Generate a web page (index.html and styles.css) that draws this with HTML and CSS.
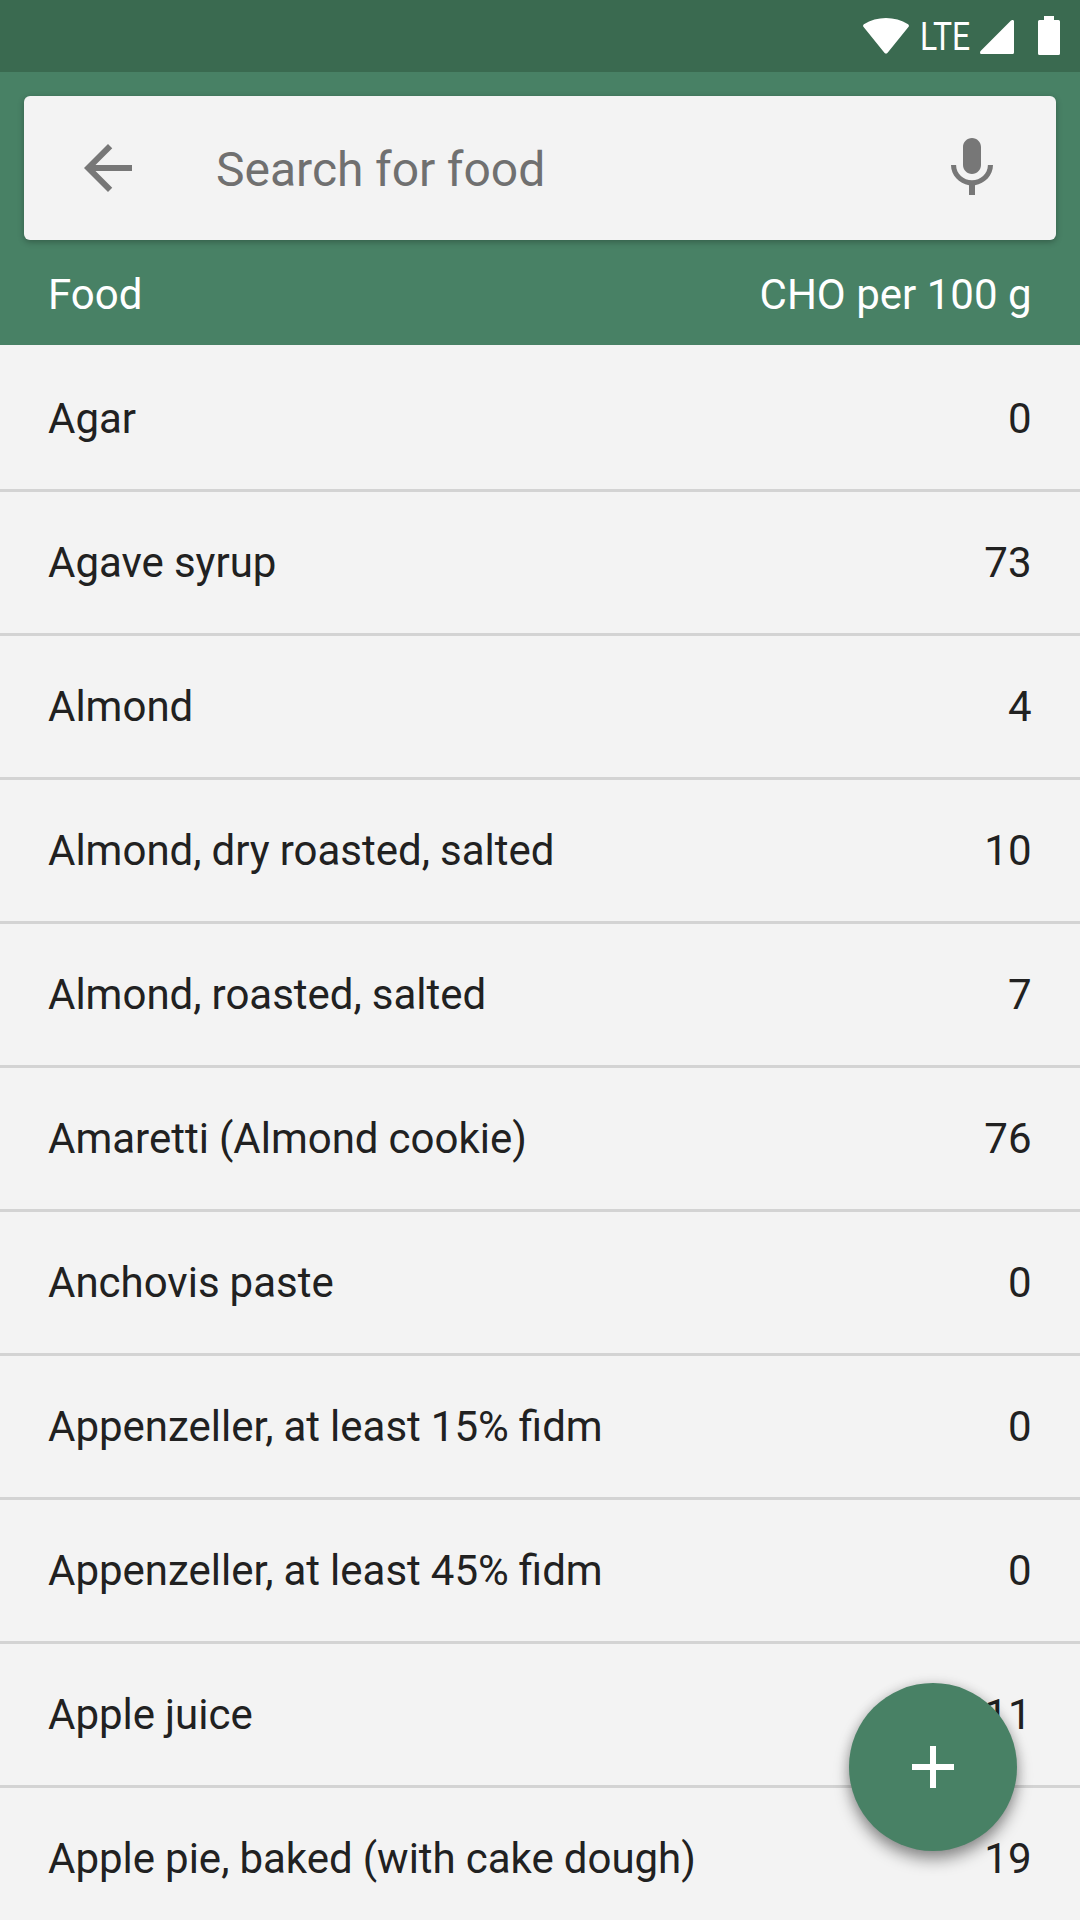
FILE: index.html
```html
<!DOCTYPE html>
<html lang="en">
<head>
<meta charset="utf-8">
<title>Food list</title>
<link rel="stylesheet" href="styles.css">
</head>
<body>
<div class="screen">
  <div class="status-bar">
    <svg class="wifi" viewBox="0 0 48 38" width="48" height="38"><path d="M1.6 9.9C.8 9 .9 7.9 1.9 7.2C15-1.2 33-1.2 46.100 7.200C47.100 7.900 47.200 9 46.400 9.900L25.600 35.700C24.600 36.900 23.400 36.900 22.400 35.700Z"/></svg>
    <span class="network">LTE</span>
    <svg class="signal" viewBox="0 0 34 34" width="34" height="34"><path d="M31 .6C32 -.4 34 0 34 1.500V32.500Q34 34 32.500 34H1.500C0 34-.4 32 .6 31Z"/></svg>
    <svg class="battery" viewBox="0 0 22 39" width="22" height="39"><path d="M6 0H16V4H20.500Q22 4 22 5.500V37.500Q22 39 20.500 39H1.500Q0 39 0 37.500V5.500Q0 4 1.500 4H6Z"/></svg>
  </div>
  <header class="header">
    <div class="search">
      <svg class="icon" viewBox="0 0 24 24"><path d="M20 11H7.830l5.590-5.590L12 4l-8 8 8 8 1.410-1.410L7.830 13H20v-2z"/></svg>
      <span class="placeholder">Search for food</span>
      <svg class="icon" viewBox="0 0 24 24"><path d="M12 14c1.660 0 3-1.340 3-3V5c0-1.660-1.340-3-3-3S9 3.340 9 5v6c0 1.660 1.340 3 3 3zm5.300-3c0 3-2.540 5.100-5.300 5.100S6.700 14 6.700 11H5c0 3.410 2.720 6.230 6 6.720V21h2v-3.280c3.280-.480 6-3.300 6-6.720h-1.700z"/></svg>
    </div>
    <div class="columns"><span>Food</span><span>CHO per 100 g</span></div>
  </header>
  <main class="list">
    <div class="row"><span>Agar</span><span>0</span></div>
    <div class="row"><span>Agave syrup</span><span>73</span></div>
    <div class="row"><span>Almond</span><span>4</span></div>
    <div class="row"><span>Almond, dry roasted, salted</span><span>10</span></div>
    <div class="row"><span>Almond, roasted, salted</span><span>7</span></div>
    <div class="row"><span>Amaretti (Almond cookie)</span><span>76</span></div>
    <div class="row"><span>Anchovis paste</span><span>0</span></div>
    <div class="row"><span>Appenzeller, at least 15% fidm</span><span>0</span></div>
    <div class="row"><span>Appenzeller, at least 45% fidm</span><span>0</span></div>
    <div class="row"><span>Apple juice</span><span>11</span></div>
    <div class="row"><span>Apple pie, baked (with cake dough)</span><span>19</span></div>
  </main>
  <div class="fab"><svg viewBox="0 0 24 24" width="72" height="72"><path d="M19 13h-6v6h-2v-6H5v-2h6V5h2v6h6v2z"/></svg></div>
</div>
</body>
</html>
```
FILE: styles.css
```css
* { box-sizing: border-box; }

body {
  margin: 0;
  font-family: Roboto, "Liberation Sans", sans-serif;
  font-size: 42px;
  word-spacing: -.4px;
  color: #212121;
  background: #f3f3f3;
}

.screen {
  position: relative;
  width: 1080px;
  height: 1920px;
  overflow: hidden;
}

.status-bar {
  display: flex;
  justify-content: flex-end;
  height: 72px;
  padding-right: 20px;
  background: #3a6a50;
  fill: #fff;
}

.wifi { margin-top: 17px; }

.network {
  width: 50px;
  margin: 0 10px;
  color: #fff;
  font-size: 38px;
  line-height: 74px;
  transform: scaleX(.84);
  transform-origin: 0 50%;
}

.signal { margin-top: 20px; }

.battery { margin: 16px 0 0 24px; }

.header {
  height: 273px;
  padding: 24px 24px 0;
  background: #488165;
}

.search {
  display: flex;
  align-items: center;
  height: 144px;
  padding: 0 48px;
  border-radius: 6px;
  background: #f3f3f3;
  box-shadow: 0 2px 6px rgba(0, 0, 0, .28);
}

.icon {
  width: 72px;
  height: 72px;
  fill: #777;
}

.placeholder {
  flex: 1;
  padding: 4px 0 0 72px;
  color: #707070;
  font-size: 48px;
  line-height: 56px;
}

.columns {
  display: flex;
  justify-content: space-between;
  padding: 30px 24.5px 0 24px;
  color: #fff;
  line-height: 50px;
  word-spacing: 0;
}

.list { padding-top: 3px; }

.row {
  display: flex;
  justify-content: space-between;
  align-items: center;
  height: 144px;
  padding: 0 48.5px 0 48px;
  border-bottom: 3px solid #d3d3d3;
}

.fab {
  position: absolute;
  right: 63px;
  bottom: 69px;
  display: flex;
  align-items: center;
  justify-content: center;
  width: 168px;
  height: 168px;
  border-radius: 50%;
  background: #488165;
  box-shadow: 0 9px 15px rgba(0, 0, 0, .38), 0 0 12px rgba(0, 0, 0, .14);
  fill: #fff;
}
```
